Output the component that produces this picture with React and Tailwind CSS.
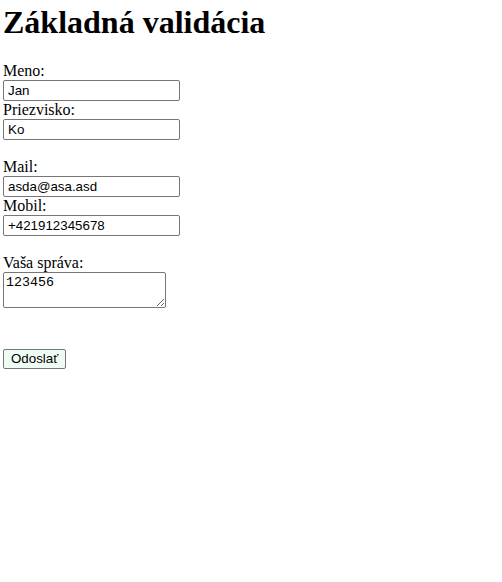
import React from 'react'

export default function App() {
  const inputCls =
    "block w-[177px] h-[21px] border border-[#767676] rounded-[2px] pl-[4px] pr-[2px] bg-white font-['Liberation_Sans',Arial,sans-serif] text-[13.33px] text-black outline-none"

  return (
    <div className="min-h-[582px] bg-white px-[3px] font-['Liberation_Serif','Times_New_Roman',serif] text-[16px] text-black">
      <h1 className="pt-[4px] mb-[21px] text-[32px] font-bold leading-[37px]">Základná validácia</h1>
      <form className="flex flex-col items-start">
        <label className="block leading-[18px]">Meno:</label>
        <input className={inputCls} defaultValue="Jan" />
        <label className="block leading-[18px]">Priezvisko:</label>
        <input className={inputCls} defaultValue="Ko" />
        <div className="h-[18px]" />
        <label className="block leading-[18px]">Mail:</label>
        <input className={inputCls} defaultValue="asda@asa.asd" />
        <label className="block leading-[18px]">Mobil:</label>
        <input className={inputCls} defaultValue="+421912345678" />
        <div className="h-[18px]" />
        <label className="block leading-[18px]">Vaša správa:</label>
        <textarea
          className="block w-[163px] h-[36px] border border-[#767676] rounded-[2px] px-[2px] py-[2px] bg-white font-['Liberation_Mono','Courier_New',monospace] text-[13.33px] leading-[15px] text-black outline-none"
          defaultValue="123456"
        />
        <button
          type="button"
          className="mt-[41px] h-[20px] px-[7px] border border-[#767676] rounded-[2px] bg-[#effcf3] font-['Liberation_Sans',Arial,sans-serif] text-[13.33px] leading-[16px] text-black"
        >
          Odoslať
        </button>
      </form>
    </div>
  )
}
